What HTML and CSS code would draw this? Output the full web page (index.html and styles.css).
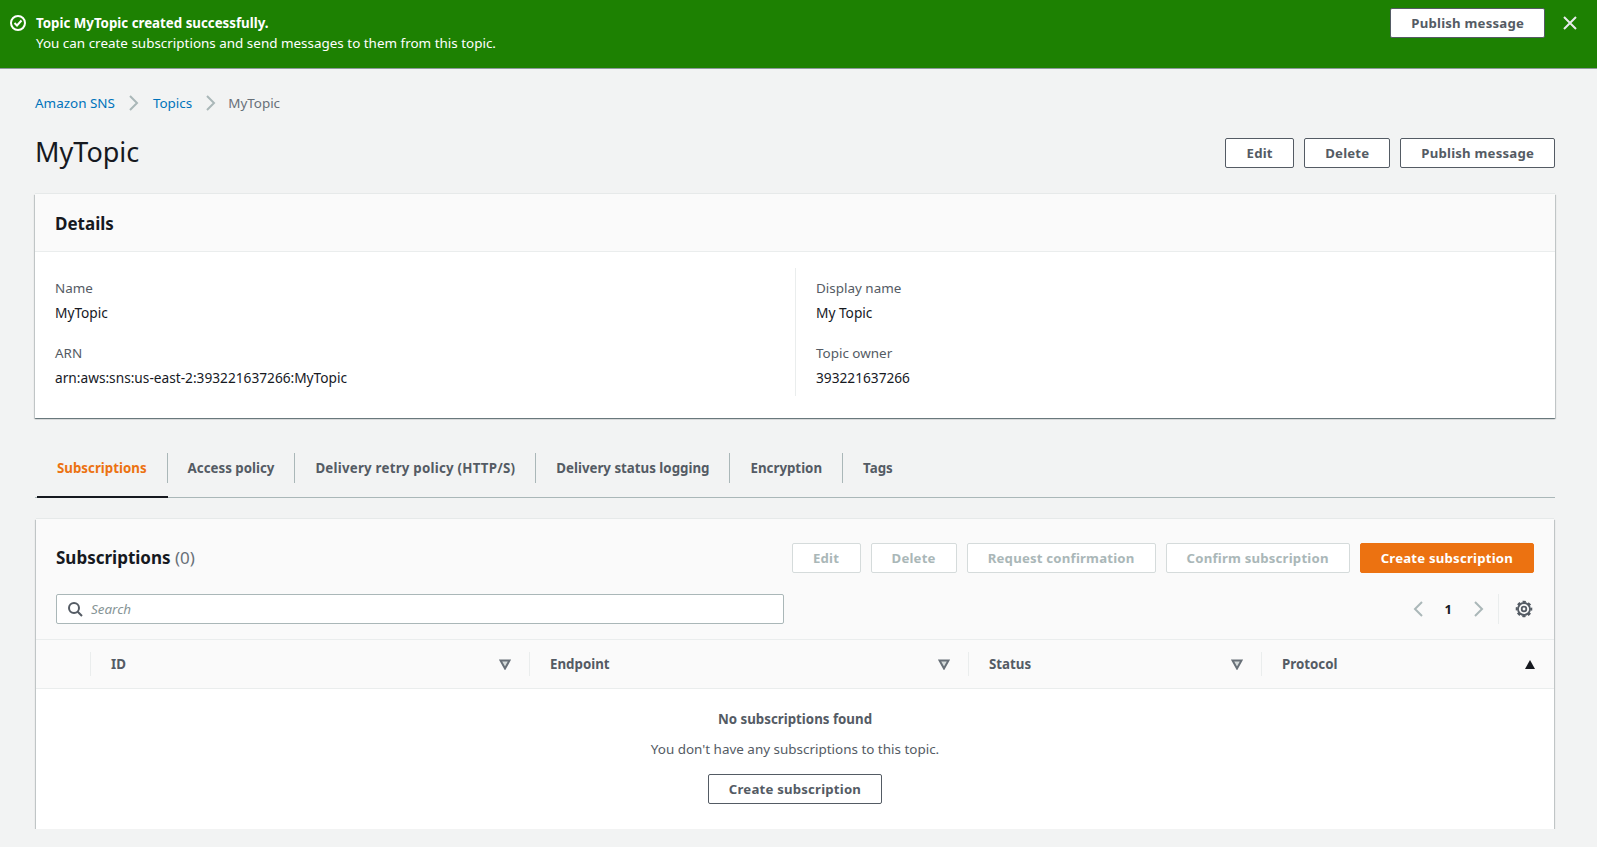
FILE: index.html
```html
<!DOCTYPE html>
<html lang="en">
  <head>
    <meta charset="UTF-8" />
    <title>MyTopic - Amazon SNS</title>
    <link rel="stylesheet" href="styles.css">
  </head>
  <body>
    <!-- Flash message -->
    <div class="flash">
      <svg class="flash-icon" width="16" height="16" viewBox="0 0 16 16" fill="none" stroke="#fff" stroke-width="2">
        <circle cx="8" cy="8" r="7"></circle>
        <path d="M4.5 8l2.500 2.500 4.500-5"></path>
      </svg>
      <div class="flash-text">
        <strong>Topic MyTopic created successfully.</strong>
        <div>You can create subscriptions and send messages to them from this topic.</div>
      </div>
      <button class="btn flash-btn">Publish message</button>
      <svg class="flash-close" width="14" height="14" viewBox="0 0 14 14" fill="none" stroke="#e9ebed" stroke-width="2">
        <path d="M1 1l12 12M13 1L1 13"></path>
      </svg>
    </div>

    <main class="content">
      <!-- Breadcrumb -->
      <nav class="crumbs">
        <a>Amazon SNS</a>
        <svg class="crumb-sep" width="10" height="16" viewBox="0 0 10 16" fill="none" stroke="#aab7b8" stroke-width="2"><path d="M1 1l7 7-7 7"></path></svg>
        <a>Topics</a>
        <svg class="crumb-sep" width="10" height="16" viewBox="0 0 10 16" fill="none" stroke="#aab7b8" stroke-width="2"><path d="M1 1l7 7-7 7"></path></svg>
        <span>MyTopic</span>
      </nav>

      <!-- Title -->
      <div class="page-head">
        <h1>MyTopic</h1>
        <div class="actions">
          <button class="btn">Edit</button>
          <button class="btn">Delete</button>
          <button class="btn">Publish message</button>
        </div>
      </div>

      <!-- Details -->
      <section class="card details">
        <div class="card-head"><h2>Details</h2></div>
        <div class="details-body">
          <div class="details-col">
            <div class="field">
              <div class="label">Name</div>
              <div class="value">MyTopic</div>
            </div>
            <div class="field">
              <div class="label">ARN</div>
              <div class="value">arn:aws:sns:us-east-2:393221637266:MyTopic</div>
            </div>
          </div>
          <div class="details-col col-right">
            <div class="field">
              <div class="label">Display name</div>
              <div class="value">My Topic</div>
            </div>
            <div class="field">
              <div class="label">Topic owner</div>
              <div class="value">393221637266</div>
            </div>
          </div>
        </div>
      </section>

      <!-- Tabs -->
      <div class="tabs">
        <div class="tab active"><span>Subscriptions</span></div>
        <div class="tab"><span>Access policy</span></div>
        <div class="tab wide"><span>Delivery retry policy (HTTP/S)</span></div>
        <div class="tab"><span>Delivery status logging</span></div>
        <div class="tab"><span>Encryption</span></div>
        <div class="tab last"><span>Tags</span></div>
      </div>

      <!-- Subscriptions -->
      <section class="card subs">
        <div class="subs-head">
          <div class="subs-top">
            <h2>Subscriptions <span class="count">(0)</span></h2>
            <div class="actions">
              <button class="btn disabled">Edit</button>
              <button class="btn disabled">Delete</button>
              <button class="btn disabled">Request confirmation</button>
              <button class="btn disabled">Confirm subscription</button>
              <button class="btn primary">Create subscription</button>
            </div>
          </div>
          <div class="subs-filter">
            <div class="search">
              <svg width="16" height="16" viewBox="0 0 16 16" fill="none" stroke="#545b64" stroke-width="2"><circle cx="7" cy="7" r="5"></circle><path d="M10.7 10.7L15 15"></path></svg>
              <span>Search</span>
            </div>
            <div class="pager">
              <svg width="10" height="16" viewBox="0 0 10 16" fill="none" stroke="#aab7b8" stroke-width="2"><path d="M9 1L2 8l7 7"></path></svg>
              <span class="page-num">1</span>
              <svg width="10" height="16" viewBox="0 0 10 16" fill="none" stroke="#aab7b8" stroke-width="2"><path d="M1 1l7 7-7 7"></path></svg>
            </div>
            <div class="settings">
              <svg width="18" height="18" viewBox="0 0 18 18" fill="none" stroke="#545b64">
                <circle cx="9" cy="9" r="2.300" stroke-width="1.800"></circle>
                <circle cx="9" cy="9" r="6" stroke-width="1.800"></circle>
                <circle cx="9" cy="9" r="7.300" stroke-width="2" stroke-dasharray="3.200 2.530" stroke-dashoffset="1.600"></circle>
              </svg>
            </div>
          </div>
        </div>

        <div class="table-head">
          <div class="th th-check"></div>
          <div class="th th-id"><span>ID</span><svg class="sort" width="12" height="11" viewBox="0 0 12 11"><path d="M1.500 1.500h9L6 9.500z"></path></svg></div>
          <div class="th th-endpoint"><span>Endpoint</span><svg class="sort" width="12" height="11" viewBox="0 0 12 11"><path d="M1.500 1.500h9L6 9.500z"></path></svg></div>
          <div class="th th-status"><span>Status</span><svg class="sort" width="12" height="11" viewBox="0 0 12 11"><path d="M1.500 1.500h9L6 9.500z"></path></svg></div>
          <div class="th th-protocol"><span>Protocol</span><i class="sort-up"></i></div>
        </div>

        <div class="empty">
          <strong>No subscriptions found</strong>
          <p>You don't have any subscriptions to this topic.</p>
          <button class="btn">Create subscription</button>
        </div>
      </section>
    </main>
  </body>
</html>
```

FILE: styles.css
```css
body {
  margin: 0;
  background-color: #f2f3f3;
  font-family: "Noto Sans", Arial, sans-serif;
  font-size: 13.45px;
  line-height: 20px;
  color: #16191f;
  overflow: hidden;
}

strong {
  font-size: 13.3px;
}

/* Flash */
.flash {
  height: 69px;
  box-sizing: border-box;
  border-bottom: 1px solid #8d9a9b;
  background-color: #1d8102;
  color: #fff;
  display: flex;
  align-items: flex-start;
  padding: 13px 20px 0 10px;
}

.flash-icon {
  margin: 2px 10px 0 0;
  flex: none;
}

.flash-text {
  flex: 1;
}

.flash-btn {
  margin-top: -5px;
  border-color: #545b64;
}

.flash-close {
  margin: 3px 0 0 18px;
  flex: none;
}

/* Buttons */
.btn {
  height: 30px;
  min-width: 69px;
  box-sizing: border-box;
  padding: 0 20px;
  background-color: #fff;
  border: 1px solid #545b64;
  border-radius: 2px;
  color: #545b64;
  font-family: inherit;
  font-size: 13.2px;
  font-weight: 700;
  letter-spacing: 0.2px;
  cursor: pointer;
}

.btn.disabled {
  border-color: #d5dbdb;
  color: #aab7b8;
}

.btn.primary {
  background-color: #ec7211;
  border-color: #ec7211;
  color: #fff;
}

.actions {
  display: flex;
  gap: 10px;
}

/* Page */
.content {
  padding: 24px 42px 0 35px;
}

.crumbs {
  display: flex;
  align-items: center;
  height: 20px;
}

.crumbs a {
  color: #0073bb;
}

.crumbs span {
  margin-left: -2px;
  color: #687078;
}

.crumb-sep {
  margin: 0 14px;
}

.page-head {
  display: flex;
  justify-content: space-between;
  align-items: center;
  margin-top: 20px;
  height: 40px;
}

h1 {
  margin: 0 0 2px;
  font-size: 27px;
  line-height: 36px;
  font-weight: 400;
}

h2 {
  margin: 0;
  font-size: 17px;
  line-height: 22px;
  font-weight: 700;
}

/* Cards */
.card {
  background-color: #fff;
  box-shadow: 0 1px 1px 0 rgba(0, 28, 36, 0.4), 1px 1px 1px 0 rgba(0, 28, 36, 0.15), -1px 1px 1px 0 rgba(0, 28, 36, 0.15), 0 -1px 0 0 #e6e9e9;
}

.details {
  margin-top: 21px;
  height: 224px;
}

.card-head {
  height: 58px;
  box-sizing: border-box;
  padding: 19px 20px 0;
  background-color: #fafafa;
  border-bottom: 1px solid #eaeded;
}

.details-body {
  display: flex;
  padding: 16px 0 0;
}

.details-col {
  width: 760px;
  padding: 10px 20px 0;
  box-sizing: border-box;
  height: 128px;
}

.col-right {
  width: auto;
  flex: 1;
  border-left: 1px solid #eaeded;
}

.field {
  margin-bottom: 20px;
}

.label {
  color: #545b64;
  margin-bottom: 5px;
}

.value {
  font-size: 13.7px;
}

/* Tabs */
.tabs {
  display: flex;
  margin-top: 34px;
  height: 45px;
  border-bottom: 1px solid #aab7b8;
  align-items: flex-start;
  font-weight: 700;
  font-size: 13.3px;
  color: #545b64;
}

.tab {
  height: 45px;
  box-sizing: border-box;
  padding: 1px 0 0;
}

.tab span {
  display: block;
  padding: 0 20px;
  height: 30px;
  line-height: 30px;
  border-right: 1px solid #aab7b8;
}

.tab.wide {
  letter-spacing: 0.23px;
}

.tab.last span {
  border-right: none;
}

.tab.active {
  color: #ec7211;
  border-bottom: 2px solid #16191f;
  height: 46px;
  margin-left: 2px;
}

/* Subscriptions */
.subs {
  margin: 21px 1px 0;
  height: 310px;
  background-color: #fff;
}

.subs-head {
  background-color: #fafafa;
  padding: 24px 20px 0;
  height: 120px;
  box-sizing: border-box;
}

.subs-top {
  display: flex;
  justify-content: space-between;
  align-items: center;
  height: 30px;
}

.count {
  font-weight: 400;
  color: #687078;
}

.subs-filter {
  display: flex;
  align-items: center;
  margin-top: 21px;
  height: 30px;
}

.search {
  width: 728px;
  height: 30px;
  box-sizing: border-box;
  background-color: #fff;
  border: 1px solid #aab7b8;
  border-radius: 2px;
  display: flex;
  align-items: center;
  padding-left: 10px;
  gap: 8px;
}

.search span {
  color: #879596;
  font-style: italic;
}

.pager {
  margin-left: auto;
  display: flex;
  align-items: center;
  gap: 22px;
}

.page-num {
  font-weight: 700;
  font-size: 13px;
}

.settings {
  margin: 0 1px 0 14px;
  padding-left: 16px;
  height: 30px;
  display: flex;
  align-items: center;
  border-left: 1px solid #eaeded;
}

/* Table */
.table-head {
  display: flex;
  height: 50px;
  box-sizing: border-box;
  background-color: #fafafa;
  border-top: 1px solid #eaeded;
  border-bottom: 1px solid #eaeded;
  align-items: center;
  font-weight: 700;
  font-size: 13.3px;
  color: #545b64;
}

.th {
  height: 24px;
  box-sizing: border-box;
  display: flex;
  align-items: center;
  justify-content: space-between;
  padding: 0 18px 0 20px;
  border-left: 1px solid #eaeded;
}

.th-check {
  width: 54px;
  border-left: none;
}

.th-id {
  width: 439px;
}

.th-endpoint {
  width: 439px;
}

.th-status {
  width: 293px;
}

.th-protocol {
  flex: 1;
  padding-right: 19px;
}

.sort {
  fill: #d5dbdb;
  stroke: #687078;
  stroke-width: 2;
}

.sort-up {
  width: 0;
  height: 0;
  border-left: 5.5px solid transparent;
  border-right: 5.5px solid transparent;
  border-bottom: 9px solid #16191f;
}

.empty {
  text-align: center;
  color: #545b64;
  padding-top: 20px;
}

.empty p {
  margin: 10px 0 15px;
}
```
